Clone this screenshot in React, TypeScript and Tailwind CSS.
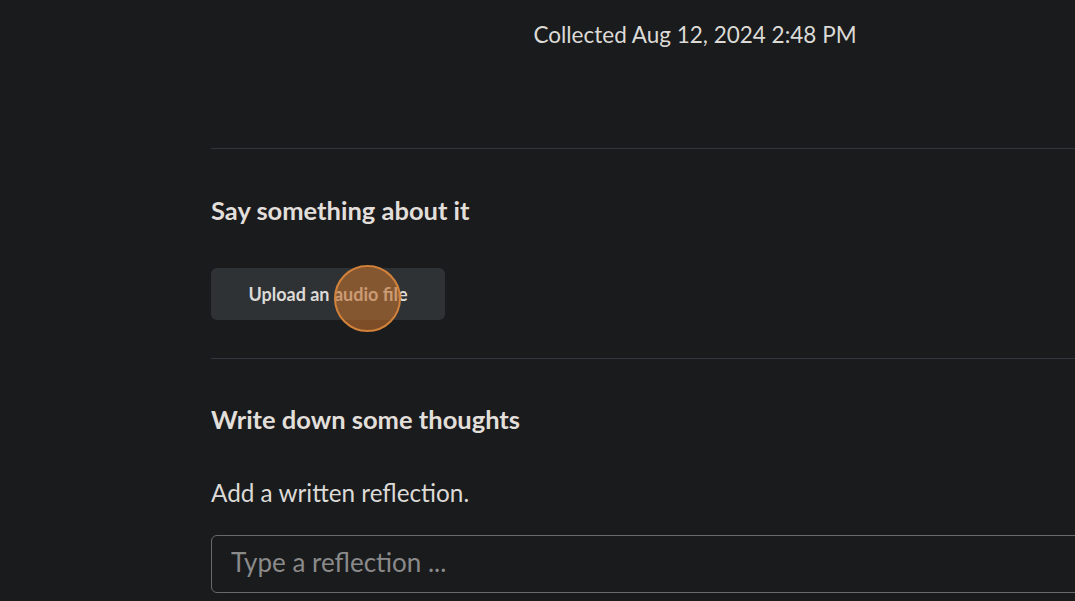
import { useState } from "react"

export default function App() {
  const [reflection, setReflection] = useState("")

  return (
    <div
      className="min-h-[601px] w-full overflow-hidden bg-[#1a1b1d] text-[#e2dfda]"
      style={{ fontFamily: "Lato, 'Noto Sans', sans-serif" }}
    >
      <div className="ml-[211px] w-[968px] pt-[20px]">
        {/* Collected date */}
        <p className="text-center text-[22.5px] leading-[30px] text-[#dcdad6]">Collected Aug 12, 2024 2:48 PM</p>

        <div className="mt-[98px] h-px bg-[#33353d]" />

        {/* Audio section */}
        <h2 className="mt-[44px] text-[25.5px] font-bold leading-[34px]">Say something about it</h2>
        <div className="relative mt-[41px] w-[234px]">
          <button className="flex h-[52px] w-[234px] items-center justify-center rounded-md bg-[#2f3235] text-[18px] font-bold text-[#dcdad6]">
            Upload an audio file
          </button>
          <span className="pointer-events-none absolute left-[123px] top-[-3px] h-[67px] w-[67px] rounded-full border-2 border-[#d2823a] bg-[#c0702e]/60" />
        </div>

        <div className="mt-[38px] h-px bg-[#33353d]" />

        {/* Written reflection */}
        <h2 className="mt-[43px] text-[25.5px] font-bold leading-[34px]">Write down some thoughts</h2>
        <p className="mt-[41px] text-[24.3px] leading-[32px] text-[#dcdad6]">Add a written reflection.</p>
        <input
          value={reflection}
          onChange={(e) => setReflection(e.target.value)}
          placeholder="Type a reflection ..."
          className="mt-[26px] h-[58px] w-full rounded-md border border-[#6a6a6a] bg-transparent px-[19px] pb-[5px] text-[26px] text-[#dcdad6] outline-none placeholder:text-[#8a8a8a]"
        />
      </div>
    </div>
  )
}
